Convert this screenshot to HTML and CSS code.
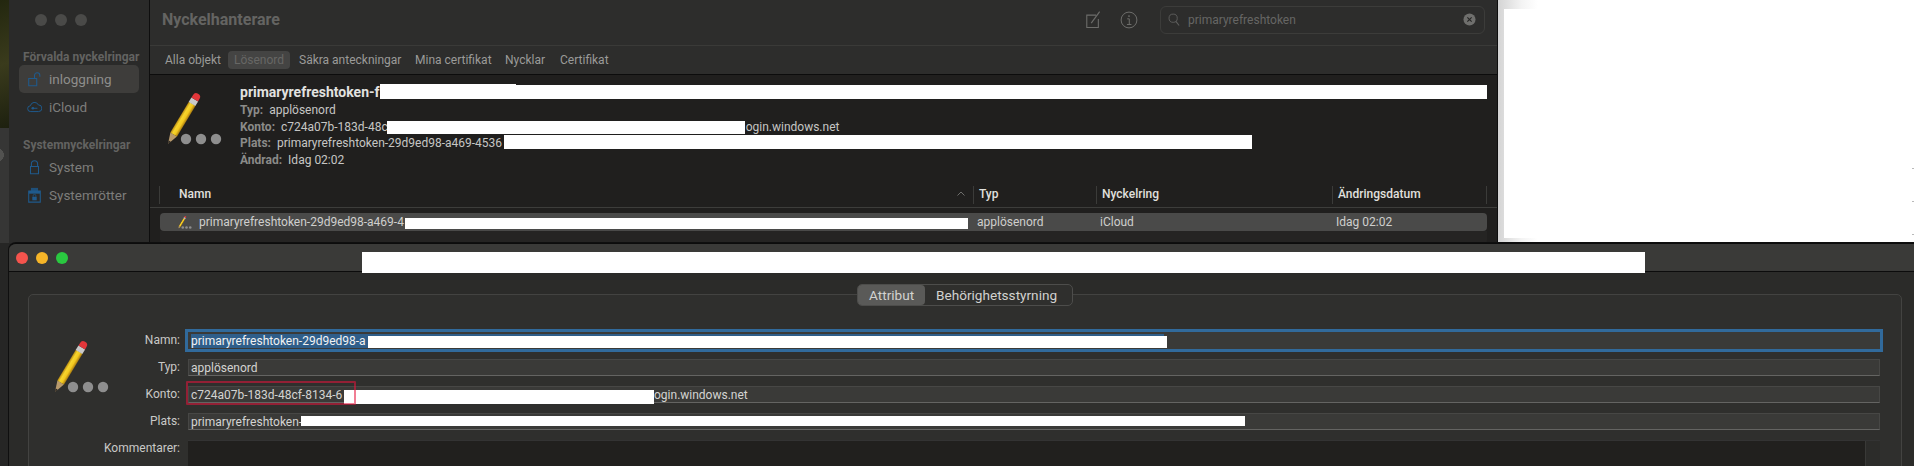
FILE: index.html
```html
<!DOCTYPE html>
<html lang="sv">
<head>
<meta charset="utf-8">
<title>Nyckelhanterare</title>
<link rel="stylesheet" href="styles.css">
</head>
<body>
<svg class="defs" width="0" height="0" aria-hidden="true">
  <defs>
    <linearGradient id="barrel" x1="0" x2="1" y1="0" y2="0">
      <stop offset="0" stop-color="#b98a12"/>
      <stop offset=".3" stop-color="#f6d52e"/>
      <stop offset=".65" stop-color="#f3c81f"/>
      <stop offset="1" stop-color="#a87a10"/>
    </linearGradient>
    <symbol id="pencil" viewBox="0 0 56 56">
      <g transform="translate(1 55) rotate(31)">
        <path d="M0 0 L-3.800 -11 H3.800 Z" fill="#b89a6c"/>
        <path d="M0 0 L-1.200 -3.400 H1.200 Z" fill="#2b2723"/>
        <rect x="-3.900" y="-47" width="7.800" height="36" fill="url(#barrel)"/>
        <rect x="-3.900" y="-52" width="7.800" height="5.400" fill="#c9c9c9"/>
        <path d="M-3.800 -52 V-55 Q-3.800 -58.500 0 -58.500 Q3.800 -58.500 3.800 -55 V-52 Z" fill="#e2363a"/>
      </g>
      <circle cx="19" cy="50" r="5.200" fill="#8e8e8e"/>
      <circle cx="34" cy="50" r="5.200" fill="#8e8e8e"/>
      <circle cx="49" cy="50" r="5.200" fill="#8e8e8e"/>
    </symbol>
  </defs>
</svg>

<div class="photo"></div>
<div class="backdrop"></div>
<div class="sheet"></div>

<section class="win win-back">
  <aside class="sidebar">
    <div class="lights">
      <span class="dot"></span><span class="dot"></span><span class="dot"></span>
    </div>
    <h2 class="side-title">Förvalda nyckelringar</h2>
    <div class="side-item side-item-on">
      <svg class="side-icon" viewBox="0 0 16 18"><path d="M1.500 8.500h9v8h-9zM8 8.500V5a3 3 0 0 1 6 0v1.500" fill="none" stroke="#1f5a8c" stroke-width="1.200"/></svg>
      <span>inloggning</span>
    </div>
    <div class="side-item">
      <svg class="side-icon" viewBox="0 0 18 14"><path d="M4.500 12.500a3.500 3.500 0 0 1-.4-7A5 5 0 0 1 13.600 4.500a4 4 0 0 1 .4 8zM6.500 8.500h6" fill="none" stroke="#1f5a8c" stroke-width="1.200"/><circle cx="7" cy="8.500" r="1.600" fill="#1f5a8c"/></svg>
      <span>iCloud</span>
    </div>
    <h2 class="side-title side-title-sys">Systemnyckelringar</h2>
    <div class="side-item">
      <svg class="side-icon" viewBox="0 0 16 18"><path d="M4.500 8.500V5.500a3.500 3.500 0 0 1 7 0v3M3.500 8.500h9v8h-9z" fill="none" stroke="#1f5a8c" stroke-width="1.200"/></svg>
      <span>System</span>
    </div>
    <div class="side-item">
      <svg class="side-icon" viewBox="0 0 16 18"><path d="M4 1h8v3.500H4z" fill="#1f4f78"/><path d="M1.500 4.500h13V17h-13z" fill="none" stroke="#1f5a8c" stroke-width="1.200"/><path d="M1.500 4.500h13V7.500h-13z" fill="#1f5a8c"/><path d="M5.500 11h5v4h-5z" fill="#1f5a8c"/><path d="M6.500 11V9.800a1.500 1.500 0 0 1 3 0V11" fill="none" stroke="#1f5a8c" stroke-width=".8"/></svg>
      <span>Systemrötter</span>
    </div>
  </aside>

  <div class="main">
    <header class="toolbar">
      <h1 class="app-title">Nyckelhanterare</h1>
      <svg class="tool-icon" viewBox="0 0 18 20"><path d="M12.500 4.500H2v14h13V9" fill="none" stroke="#6d6d6b" stroke-width="1.200"/><path d="M7 13.500 16.500 .5" fill="none" stroke="#6d6d6b" stroke-width="1.300"/></svg>
      <svg class="tool-icon tool-info" viewBox="0 0 20 20"><circle cx="10" cy="10" r="8.800" fill="none" stroke="#6d6d6b" stroke-width="1.100"/><path d="M8 8.700h2.300V15M7.700 15h5" fill="none" stroke="#6d6d6b" stroke-width="1.100"/><circle cx="10" cy="5.600" r="1" fill="#6d6d6b"/></svg>
      <div class="search">
        <svg class="search-icon" viewBox="0 0 14 16"><circle cx="6" cy="6.500" r="4.800" fill="none" stroke="#5e5e5c" stroke-width="1.100"/><path d="M9.200 10.300 13 15" stroke="#5e5e5c" stroke-width="1.300"/></svg>
        <span class="search-text">primaryrefreshtoken</span>
        <svg class="search-clear" viewBox="0 0 14 14"><circle cx="7" cy="7" r="6.500" fill="#6f6f6d"/><path d="M4.700 4.700l4.600 4.600M9.300 4.700l-4.600 4.600" stroke="#262625" stroke-width="1.200"/></svg>
      </div>
    </header>

    <nav class="tabs">
      <span class="tab">Alla objekt</span>
      <span class="tab tab-on">Lösenord</span>
      <span class="tab">Säkra anteckningar</span>
      <span class="tab">Mina certifikat</span>
      <span class="tab">Nycklar</span>
      <span class="tab">Certifikat</span>
    </nav>

    <div class="content">
      <div class="detail">
        <svg class="detail-icon"><use href="#pencil"/></svg>
        <div class="detail-lines">
          <div class="detail-name">primaryrefreshtoken-f</div>
          <div class="detail-line"><b>Typ:</b> applösenord</div>
          <div class="detail-line"><b>Konto:</b> c724a07b-183d-48c<span class="after-konto">ogin.windows.net</span></div>
          <div class="detail-line"><b>Plats:</b> primaryrefreshtoken-29d9ed98-a469-4536</div>
          <div class="detail-line"><b>Ändrad:</b> Idag 02:02</div>
        </div>
        <div class="mask mask-name"></div>
        <div class="mask mask-name-top"></div>
        <div class="mask mask-konto"></div>
        <div class="mask mask-plats"></div>
      </div>

      <div class="thead">
        <div class="th th-name">Namn<svg class="caret" viewBox="0 0 8 5"><path d="M.5 4.500 4 1l3.500 3.500" fill="none" stroke="#6e6e6c" stroke-width="1"/></svg></div>
        <div class="th">Typ</div>
        <div class="th">Nyckelring</div>
        <div class="th th-last">Ändringsdatum</div>
      </div>

      <div class="trow">
        <div class="td td-name">
          <svg class="row-icon"><use href="#pencil"/></svg>
          <span>primaryrefreshtoken-29d9ed98-a469-4</span>
          <div class="mask mask-row"></div>
        </div>
        <div class="td">applösenord</div>
        <div class="td">iCloud</div>
        <div class="td">Idag 02:02</div>
      </div>
      <div class="trow-next"></div>
    </div>
  </div>
</section>

<section class="win win-front">
  <header class="titlebar">
    <span class="light light-red"></span><span class="light light-yellow"></span><span class="light light-green"></span>
    <div class="mask mask-title"></div>
  </header>
  <div class="front-body">
    <div class="box">
      <div class="segmented">
        <span class="seg seg-on">Attribut</span>
        <span class="seg">Behörighetsstyrning</span>
      </div>
      <div class="form">
        <svg class="form-icon"><use href="#pencil"/></svg>
        <label class="lbl">Namn:</label>
        <div class="field field-focus"><span class="selected">primaryrefreshtoken-29d9ed98-a</span><div class="mask mask-f-name"></div></div>
        <label class="lbl">Typ:</label>
        <div class="field">applösenord</div>
        <label class="lbl">Konto:</label>
        <div class="field">c724a07b-183d-48cf-8134-6<span class="after-f-konto">ogin.windows.net</span><div class="mask mask-f-konto"></div><div class="redbox"></div></div>
        <label class="lbl">Plats:</label>
        <div class="field">primaryrefreshtoken-<div class="mask mask-f-plats"></div></div>
        <label class="lbl lbl-wide">Kommentarer:</label>
        <div class="comment"><div class="comment-bar"></div></div>
      </div>
    </div>
  </div>
</section>
</body>
</html>
```
FILE: styles.css
```css
* { box-sizing: border-box; }
html, body { margin: 0; padding: 0; }
body {
  position: relative;
  width: 1914px;
  height: 466px;
  overflow: hidden;
  background: #262625;
  font-family: Roboto, "Liberation Sans", sans-serif;
  font-size: 12px;
  color: #cfcfcd;
}
.defs { position: absolute; }
.photo {
  position: absolute; left: 0; top: 0; width: 9px; height: 128px;
  background: linear-gradient(160deg, #23270f, #3a3b1c 50%, #1d200f);
}
.backdrop {
  position: absolute; left: 0; top: 128px; width: 9px; height: 115px;
  background: radial-gradient(circle 7px at -3px 27px, #525250 97%, transparent) #363635;
}
.sheet {
  position: absolute; left: 1498px; top: 0; width: 416px; height: 243px;
  background: linear-gradient(90deg, #d4d4d4, #f4f4f4 24px, #ffffff 40px);
}
.sheet::before {
  content: "";
  position: absolute; left: 6px; top: 9px; right: 0; bottom: 5px;
  background: #fff;
}
.sheet::after {
  content: "";
  position: absolute; right: 0; top: 168px; width: 2px; height: 67px;
  background: repeating-linear-gradient(180deg, #b9b9b9 0 1px, transparent 1px 33px);
}
.mask { position: absolute; background: #fff; }

.win { position: absolute; }
.win-back {
  left: 9px; top: 0; width: 1489px; height: 243px;
  display: flex;
  background: #201f1e;
  border-right: 1px solid #0e0e0e;
}

/* sidebar */
.sidebar {
  width: 141px;
  flex: none;
  padding: 0 10px;
  background: #2a2a29;
  border-right: 1px solid #0e0e0e;
  color: #7d7d7b;
}
.lights { display: flex; gap: 8px; padding: 14px 0 0 16px; height: 47px; }
.dot { width: 12px; height: 12px; border-radius: 50%; background: #4a4a48; }
.side-title {
  margin: 0 0 0 4px;
  height: 18px;
  line-height: 20px;
  font-size: 12px;
  font-weight: 700;
  color: #636361;
  white-space: nowrap;
}
.side-title-sys { margin-top: 17px; height: 15px; line-height: 14px; }
.side-item {
  display: flex; align-items: center;
  height: 28px;
  padding-left: 8px;
  font-size: 13.500px;
  border-radius: 5px;
}
.side-item-on { background: #3e3d3b; color: #8e8e8c; }
.side-icon { width: 15px; height: 16px; margin-right: 7px; flex: none; }

/* main */
.main { flex: 1; display: flex; flex-direction: column; min-width: 0; }
.toolbar {
  height: 46px;
  flex: none;
  display: flex; align-items: center;
  padding: 0 12px 6px 12px;
  background: #2d2d2c;
  border-bottom: 1px solid #3a3a38;
}
.app-title { margin: 0 auto 0 0; font-size: 16px; font-weight: 700; color: #646462; }
.tool-icon { width: 16px; height: 18px; margin-right: 19px; flex: none; }
.tool-info { width: 18px; height: 18px; margin-right: 22px; }
.search {
  width: 325px; height: 28px;
  display: flex; align-items: center;
  padding: 0 8px 0 7px;
  border: 1px solid #3c3c3a;
  border-radius: 6px;
  color: #666664;
}
.search-icon { width: 12px; height: 15px; margin-right: 8px; flex: none; }
.search-text { flex: 1; }
.search-clear { width: 13px; height: 13px; flex: none; }

.tabs {
  height: 29px;
  flex: none;
  display: flex; align-items: center;
  padding: 0 0 0 14px;
  background: #2d2d2c;
  border-bottom: 1px solid #0c0c0c;
  color: #9b9b99;
}
.tab { line-height: 18px; white-space: nowrap; }
.tab:first-child { padding-left: 1px; width: 64px; }
.tab-on { width: 62px; text-align: center; background: #444443; border-radius: 4px; color: #676765; margin-right: 9px; }
.tab:nth-child(3) { width: 116px; }
.tab:nth-child(4) { width: 90px; }
.tab:nth-child(5) { width: 55px; }

.content { flex: 1; position: relative; background: #201f1e; }
.detail { position: relative; height: 111px; display: flex; }
.detail-icon { width: 56px; height: 56px; margin: 14px 0 0 17px; flex: none; }
.detail-lines { margin: 8px 0 0 17px; line-height: 16.700px; white-space: nowrap; color: #c6c6c4; }
.detail-name { font-size: 14px; font-weight: 700; color: #e2e2e0; height: 19px; line-height: 18px; }
.detail-line b { color: #8b8b89; font-weight: 700; margin-right: 3px; }
.after-konto { margin-left: 358px; }
.mask-name { left: 230px; top: 10px; width: 1107px; height: 14px; }
.mask-name-top { left: 230px; top: 9px; width: 136px; height: 2px; }
.mask-konto { left: 237px; top: 46px; width: 358px; height: 13px; }
.mask-plats { left: 354px; top: 60px; width: 748px; height: 14px; }

.thead {
  height: 22px;
  display: grid;
  grid-template-columns: 814px 123px 236px 155px;
  margin-left: 9px;
  width: 1328px;
  position: relative;
  color: #e0e0de;
  font-weight: 500;
}
.thead::after {
  content: "";
  position: absolute; left: -9px; right: -10px; bottom: 0; height: 1px; background: #3d3d3b;
}
.th {
  border-left: 1px solid #3b3b39;
  margin: 0 0 4px;
  padding-left: 5px;
  line-height: 17px;
  white-space: nowrap;
}
.th-name { padding-left: 19px; position: relative; }
.th-last { border-right: 1px solid #3b3b39; }
.caret { position: absolute; right: 8px; top: 5px; width: 8px; height: 5px; }
.trow {
  display: grid;
  grid-template-columns: 817px 123px 236px 151px;
  width: 1327px;
  height: 18px;
  margin: 5px 0 0 10px;
  background: #4a4a49;
  border-radius: 4px;
  align-items: center;
  color: #cfcfcd;
}
.td-name { position: relative; display: flex; align-items: center; padding-left: 18px; white-space: nowrap; }
.row-icon { width: 14px; height: 14px; margin-right: 7px; flex: none; }
.mask-row { left: 245px; top: 3px; width: 563px; height: 11px; }
.trow-next { width: 1327px; height: 13px; margin-left: 10px; background: #252423; border-radius: 0 0 4px 4px; }

/* front window */
.win-front {
  left: 9px; top: 243px; width: 1915px; height: 240px;
  background: #2b2b29;
  border-radius: 7px 0 0 0;
  border-top: 1px solid #0c0c0c;
  box-shadow: 0 0 0 1px #0f0f0f;
  overflow: hidden;
}
.titlebar {
  position: relative;
  height: 28px;
  display: flex; align-items: center; gap: 8px;
  padding: 0 0 0 7px;
  background: #3a3a38;
  border-bottom: 1px solid #0c0c0c;
}
.light { width: 12px; height: 12px; border-radius: 50%; }
.light-red { background: #f5544d; }
.light-yellow { background: #f6b528; }
.light-green { background: #2ac840; }
.mask-title { left: 353px; top: 8px; width: 1283px; height: 21px; }

.front-body { padding: 22px 0 0 19px; height: 300px; }
.box {
  width: 1874px;
  height: 260px;
  background: #2f2f2d;
  border: 1px solid #434341;
  border-radius: 5px;
}
.segmented {
  width: 216px;
  height: 22px;
  margin: -11px 0 0 828px;
  display: flex; align-items: center;
  background: #2f2f2d;
  border: 1px solid #4d4d4b;
  border-radius: 5px;
  font-size: 13.600px;
  color: #d2d2d0;
}
.seg { padding: 0 11px; line-height: 20px; white-space: nowrap; }
.seg-on { width: 67px; background: #5a5a58; border-radius: 4px; }

.form {
  margin: 26px 21px 0 0;
  display: grid;
  grid-template-columns: 80px 63px 1fr;
  grid-auto-rows: 17px;
  column-gap: 8px;
  row-gap: 10px;
}
.form-icon { grid-column: 1; grid-row: 1 / 4; width: 56px; height: 56px; margin: 5px 0 0 25px; }
.lbl { grid-column: 2; text-align: right; line-height: 17px; color: #c9c9c7; }
.lbl-wide { grid-column: 1 / 3; }
.field {
  grid-column: 3;
  position: relative;
  padding-left: 2px;
  line-height: 16px;
  white-space: nowrap;
  background: #3a3a38;
  border: 1px solid #474745;
  border-bottom-color: #646462;
  color: #d4d4d2;
}
.field-focus { box-shadow: 0 0 0 3px #316a9b; border: 0; padding-left: 3px; padding-top: 1px; }
.selected { display: inline-block; width: 973px; height: 14px; line-height: 14px; background: #2f5e8a; color: #f2f2f2; }
.mask-f-name { left: 180px; top: 4px; width: 799px; height: 12px; }
.mask-f-konto { left: 155px; top: 3px; width: 310px; height: 14px; }
.mask-f-plats { left: 112px; top: 2px; width: 944px; height: 10px; }
.after-f-konto { position: absolute; left: 465px; top: 0; }
.redbox {
  position: absolute; left: -3px; top: -6px; width: 170px; height: 24px;
  border: 2px solid rgba(230, 20, 60, .55);
  border-radius: 1px;
}
.comment { grid-column: 3; position: relative; height: 60px; background: #21201e; border-top: 1px solid #333; }
.comment-bar { position: absolute; right: 0; top: 0; bottom: 0; width: 15px; background: #2c2c2a; border-left: 1px solid #393937; }
```
